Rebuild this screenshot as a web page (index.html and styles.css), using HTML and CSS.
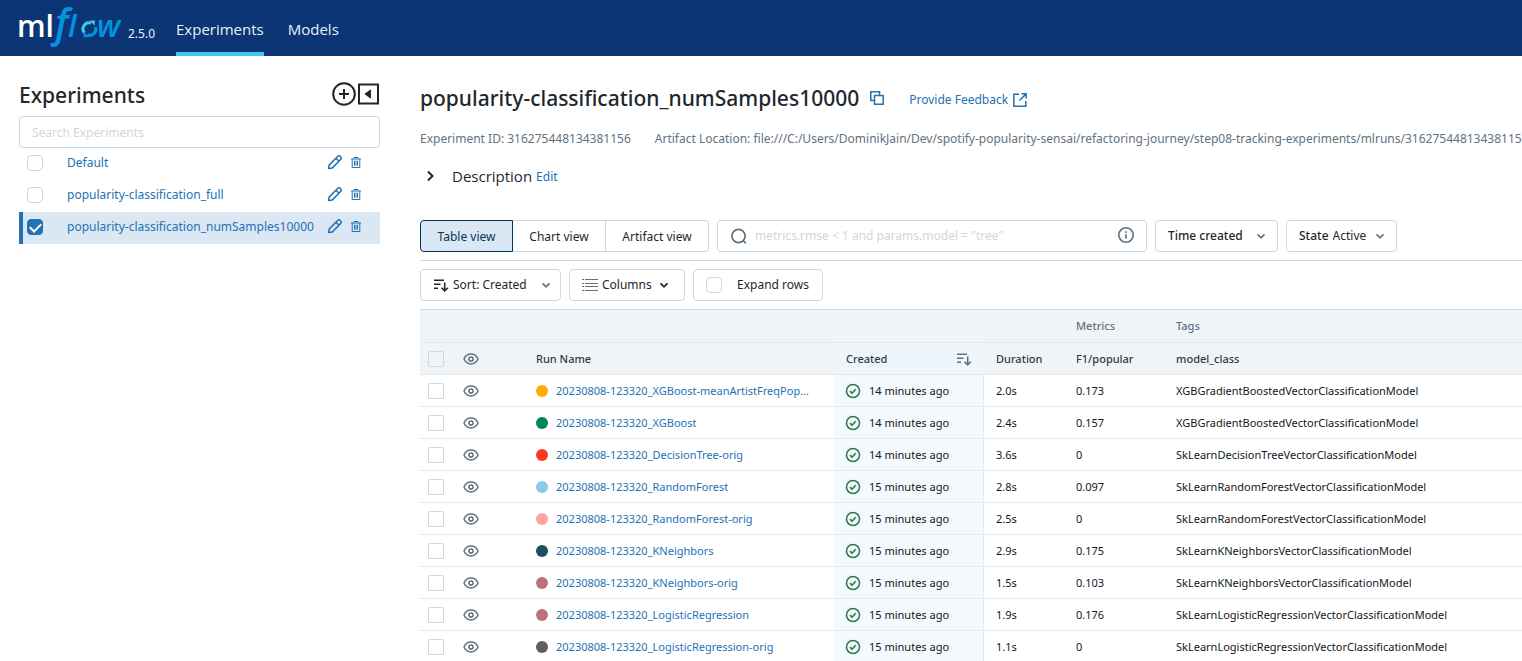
FILE: index.html
```
<!DOCTYPE html>
<html lang="en">
<head>
<meta charset="utf-8">
<title>MLflow Experiments</title>
<link rel="stylesheet" href="styles.css">
</head>
<body>
<svg class="sprite" aria-hidden="true">
  <symbol id="eye" viewBox="0 0 16 16"><path d="M1 8C2.500 4.700 5 3.100 8 3.100S13.500 4.700 15 8C13.500 11.300 11 12.900 8 12.900S2.500 11.300 1 8Z" fill="none" stroke="currentColor" stroke-width="1.500"/><circle cx="8" cy="8" r="2.100" fill="none" stroke="currentColor" stroke-width="1.500"/></symbol>
  <symbol id="ok" viewBox="0 0 16 16"><circle cx="8" cy="8" r="6.500" fill="none" stroke="currentColor" stroke-width="1.500"/><path d="M5 8.100l2.100 2L10.800 6.200" fill="none" stroke="currentColor" stroke-width="1.500"/></symbol>
  <symbol id="chevron" viewBox="0 0 16 16"><path d="M4.500 6.300L8 9.800l3.500-3.500" fill="none" stroke="currentColor" stroke-width="1.700"/></symbol>
  <symbol id="pencil" viewBox="0 0 16 16"><path d="M1.700 13.500l.4-3.400L10.900 1.300c.6-.6 1.500-.6 2.100 0l.9.900c.6.600.6 1.500 0 2.100L5.100 13.100zM9 3.200l3 3" fill="none" stroke="currentColor" stroke-width="1.500" stroke-linejoin="round"/></symbol>
  <symbol id="trash" viewBox="0 0 12 14"><path d="M1 3h10M4 2.500V1.500h4v1M2.200 3v8.500h7.600V3M4.500 4.700v5M6 4.700v5M7.500 4.700v5" fill="none" stroke="currentColor" stroke-width="1"/></symbol>
  <symbol id="sort" viewBox="0 0 16 16"><path d="M1 3.200h10M1 7.200h6.500M1 11.200h4M11.700 5.500v8M8.500 10.700l3.200 3.200 3.200-3.200" fill="none" stroke="currentColor" stroke-width="1.600"/></symbol>
</svg>
<div class="app">
  <header class="topbar">
    <a class="brand" href="#" aria-label="mlflow home">
      <svg class="logo" width="109" height="56" viewBox="0 0 109 56">
        <text class="logo-ml" x="-1" y="37">ml</text>
        <text class="logo-f" x="37" y="37">f</text>
        <text class="logo-flow" x="50" y="37">l</text>
        <g fill="none" stroke="#43c9ed" stroke-width="3"><path d="M66.500 32.800A6 6 0 0 1 73 23.200"/><path d="M77.300 27a6 6 0 0 1-8 7.800" stroke="#0194e2"/></g>
        <path d="M71.500 20.500h5.300v5.300z" fill="#43c9ed"/><path d="M71 37.200h-5.500v-5.400z" fill="#0194e2"/>
        <text class="logo-flow" x="79" y="37">w</text>
      </svg>
      <span class="version">2.5.0</span>
    </a>
    <nav class="nav">
      <a class="nav-link active" href="#">Experiments</a>
      <a class="nav-link" href="#">Models</a>
    </nav>
  </header>
  <div class="body">
    <aside class="sidebar">
      <div class="side-head">
        <h2>Experiments</h2>
        <button class="icon-btn" aria-label="New experiment"><svg width="24" height="24" viewBox="0 0 24 24"><circle cx="12" cy="12" r="10.800" fill="none" stroke="currentColor" stroke-width="2"/><path d="M12 7v10M7 12h10" stroke="currentColor" stroke-width="2"/></svg></button>
        <button class="icon-btn" aria-label="Collapse sidebar"><svg width="24" height="24" viewBox="0 0 24 24"><rect x="3" y="2.500" width="19" height="19" fill="none" stroke="currentColor" stroke-width="2"/><path d="M14.500 8v8L9 12z" fill="currentColor" stroke="currentColor"/></svg></button>
      </div>
      <input class="side-search" type="text" placeholder="Search Experiments" aria-label="Search experiments">
      <ul class="exp-list">
        <li class="exp"><input type="checkbox" class="check" id="e1"><label for="e1">Default</label><button class="icon-btn" aria-label="Rename"><svg width="16" height="16"><use href="#pencil"/></svg></button><button class="icon-btn" aria-label="Delete"><svg width="12" height="14"><use href="#trash"/></svg></button></li>
        <li class="exp"><input type="checkbox" class="check" id="e2"><label for="e2">popularity-classification_full</label><button class="icon-btn" aria-label="Rename"><svg width="16" height="16"><use href="#pencil"/></svg></button><button class="icon-btn" aria-label="Delete"><svg width="12" height="14"><use href="#trash"/></svg></button></li>
        <li class="exp selected"><input type="checkbox" class="check" id="e3" checked><label for="e3">popularity-classification_numSamples10000</label><button class="icon-btn" aria-label="Rename"><svg width="16" height="16"><use href="#pencil"/></svg></button><button class="icon-btn" aria-label="Delete"><svg width="12" height="14"><use href="#trash"/></svg></button></li>
      </ul>
    </aside>
    <main class="main">
      <div class="title-row">
        <h1>popularity-classification_numSamples10000</h1>
        <button class="icon-btn link" aria-label="Copy name"><svg width="16" height="16" viewBox="0 0 16 16" fill="none" stroke="currentColor" stroke-width="1.500"><path d="M5 10.500H1.800V1.800h8.700V5"/><path d="M5.500 5.500h8.700v8.700H5.500z"/></svg></button>
        <a class="feedback" href="#">Provide Feedback <svg width="16" height="16" viewBox="0 0 16 16" fill="none" stroke="currentColor" stroke-width="1.500"><path d="M7 2.200H1.800v12h12V9M9.500 1.800h4.700v4.700M14 2L7.500 8.500"/></svg></a>
      </div>
      <div class="meta"><span>Experiment ID: 316275448134381156</span><span>Artifact Location: file:///C:/Users/DominikJain/Dev/spotify-popularity-sensai/refactoring-journey/step08-tracking-experiments/mlruns/316275448134381156</span></div>
      <div class="desc"><button class="desc-toggle"><svg width="20" height="20" viewBox="0 0 20 20"><path d="M8 5.500l4.500 4.500L8 14.500" fill="none" stroke="currentColor" stroke-width="2"/></svg>Description</button><a href="#">Edit</a></div>
      <div class="toolbar">
        <div class="segmented">
          <button class="seg on">Table view</button><button class="seg">Chart view</button><button class="seg">Artifact view</button>
        </div>
        <div class="box search">
          <svg width="18" height="18" viewBox="0 0 18 18" fill="none" stroke="currentColor" stroke-width="1.700"><circle cx="8.500" cy="9" r="6.600"/><path d="M13 13.500l2.800 2.800"/></svg>
          <input type="text" placeholder="metrics.rmse &lt; 1 and params.model = &quot;tree&quot;" aria-label="Search runs">
          <button class="icon-btn" aria-label="Search help"><svg width="16" height="18" viewBox="0 0 16 18"><circle cx="8" cy="8" r="7.200" fill="none" stroke="currentColor" stroke-width="1.600"/><path d="M8 4.300v1.700M8 7.300v4.200" stroke="currentColor" stroke-width="1.700"/></svg></button>
        </div>
        <div class="box time"><select class="strong" aria-label="Time created"><option>Time created</option></select><svg class="chev" width="16" height="16"><use href="#chevron"/></svg></div>
        <div class="box state"><label class="strong" for="state">State</label><select id="state"><option>Active</option></select><svg class="chev" width="16" height="16"><use href="#chevron"/></svg></div>
      </div>
      <div class="toolbar second">
        <div class="box sort"><svg width="16" height="16"><use href="#sort"/></svg><select aria-label="Sort"><option>Sort: Created</option></select><svg class="chev" width="16" height="16"><use href="#chevron"/></svg></div>
        <button class="box columns"><svg class="chev" width="16" height="16" viewBox="0 0 16 16"><path d="M0 2.500h2M3 2.500h13M0 6.500h2M3 6.500h13M0 9.500h2M3 9.500h13M0 13.500h2M3 13.500h13" stroke="currentColor" stroke-width="1"/></svg>Columns<svg width="16" height="16"><use href="#chevron"/></svg></button>
        <label class="box expand"><input type="checkbox" class="check">Expand rows</label>
      </div>
      <table class="runs">
        <colgroup><col class="c-check"><col class="c-eye"><col class="c-name"><col class="c-created"><col class="c-duration"><col class="c-metric"><col></colgroup>
        <thead>
          <tr class="groups"><td colspan="5"></td><th>Metrics</th><th>Tags</th></tr>
          <tr><th class="sel"><input type="checkbox" class="check" aria-label="Select all"></th><th class="vis"><svg class="eye" width="16" height="16"><use href="#eye"/></svg></th><th>Run Name</th><th class="created"><span class="cell">Created<svg class="eye end" width="16" height="16"><use href="#sort"/></svg></span></th><th>Duration</th><th>F1/popular</th><th>model_class</th></tr>
        </thead>
        <tbody>
          <tr><td class="sel"><input type="checkbox" class="check" aria-label="Select run"></td><td class="vis"><svg class="eye" width="16" height="16"><use href="#eye"/></svg></td><td><span class="cell"><i class="dot amber"></i><a href="#">20230808-123320_XGBoost-meanArtistFreqPop...</a></span></td><td class="created"><span class="cell"><svg class="ok" width="16" height="16"><use href="#ok"/></svg>14 minutes ago</span></td><td>2.0s</td><td>0.173</td><td>XGBGradientBoostedVectorClassificationModel</td></tr>
          <tr><td class="sel"><input type="checkbox" class="check" aria-label="Select run"></td><td class="vis"><svg class="eye" width="16" height="16"><use href="#eye"/></svg></td><td><span class="cell"><i class="dot green"></i><a href="#">20230808-123320_XGBoost</a></span></td><td class="created"><span class="cell"><svg class="ok" width="16" height="16"><use href="#ok"/></svg>14 minutes ago</span></td><td>2.4s</td><td>0.157</td><td>XGBGradientBoostedVectorClassificationModel</td></tr>
          <tr><td class="sel"><input type="checkbox" class="check" aria-label="Select run"></td><td class="vis"><svg class="eye" width="16" height="16"><use href="#eye"/></svg></td><td><span class="cell"><i class="dot red"></i><a href="#">20230808-123320_DecisionTree-orig</a></span></td><td class="created"><span class="cell"><svg class="ok" width="16" height="16"><use href="#ok"/></svg>14 minutes ago</span></td><td>3.6s</td><td>0</td><td>SkLearnDecisionTreeVectorClassificationModel</td></tr>
          <tr><td class="sel"><input type="checkbox" class="check" aria-label="Select run"></td><td class="vis"><svg class="eye" width="16" height="16"><use href="#eye"/></svg></td><td><span class="cell"><i class="dot sky"></i><a href="#">20230808-123320_RandomForest</a></span></td><td class="created"><span class="cell"><svg class="ok" width="16" height="16"><use href="#ok"/></svg>15 minutes ago</span></td><td>2.8s</td><td>0.097</td><td>SkLearnRandomForestVectorClassificationModel</td></tr>
          <tr><td class="sel"><input type="checkbox" class="check" aria-label="Select run"></td><td class="vis"><svg class="eye" width="16" height="16"><use href="#eye"/></svg></td><td><span class="cell"><i class="dot pink"></i><a href="#">20230808-123320_RandomForest-orig</a></span></td><td class="created"><span class="cell"><svg class="ok" width="16" height="16"><use href="#ok"/></svg>15 minutes ago</span></td><td>2.5s</td><td>0</td><td>SkLearnRandomForestVectorClassificationModel</td></tr>
          <tr><td class="sel"><input type="checkbox" class="check" aria-label="Select run"></td><td class="vis"><svg class="eye" width="16" height="16"><use href="#eye"/></svg></td><td><span class="cell"><i class="dot teal"></i><a href="#">20230808-123320_KNeighbors</a></span></td><td class="created"><span class="cell"><svg class="ok" width="16" height="16"><use href="#ok"/></svg>15 minutes ago</span></td><td>2.9s</td><td>0.175</td><td>SkLearnKNeighborsVectorClassificationModel</td></tr>
          <tr><td class="sel"><input type="checkbox" class="check" aria-label="Select run"></td><td class="vis"><svg class="eye" width="16" height="16"><use href="#eye"/></svg></td><td><span class="cell"><i class="dot mauve"></i><a href="#">20230808-123320_KNeighbors-orig</a></span></td><td class="created"><span class="cell"><svg class="ok" width="16" height="16"><use href="#ok"/></svg>15 minutes ago</span></td><td>1.5s</td><td>0.103</td><td>SkLearnKNeighborsVectorClassificationModel</td></tr>
          <tr><td class="sel"><input type="checkbox" class="check" aria-label="Select run"></td><td class="vis"><svg class="eye" width="16" height="16"><use href="#eye"/></svg></td><td><span class="cell"><i class="dot mauve"></i><a href="#">20230808-123320_LogisticRegression</a></span></td><td class="created"><span class="cell"><svg class="ok" width="16" height="16"><use href="#ok"/></svg>15 minutes ago</span></td><td>1.9s</td><td>0.176</td><td>SkLearnLogisticRegressionVectorClassificationModel</td></tr>
          <tr><td class="sel"><input type="checkbox" class="check" aria-label="Select run"></td><td class="vis"><svg class="eye" width="16" height="16"><use href="#eye"/></svg></td><td><span class="cell"><i class="dot grey"></i><a href="#">20230808-123320_LogisticRegression-orig</a></span></td><td class="created"><span class="cell"><svg class="ok" width="16" height="16"><use href="#ok"/></svg>15 minutes ago</span></td><td>1.1s</td><td>0</td><td>SkLearnLogisticRegressionVectorClassificationModel</td></tr>
        </tbody>
      </table>
    </main>
  </div>
</div>
</body>
</html>
```
FILE: styles.css
```
* { box-sizing: border-box; }
body { margin: 0; font: 12px/20px "Noto Sans", "Open Sans", sans-serif; color: #1f272d; background: #fff; }
button, input, select { font: inherit; color: inherit; }
button { background: none; border: 0; padding: 0; cursor: pointer; }
a { color: #2272b4; text-decoration: none; }
svg { display: block; flex: none; }
h1, h2 { margin: 0; font-weight: 500; }
.sprite { position: absolute; width: 0; height: 0; }
.app { height: 100vh; overflow: hidden; display: flex; flex-direction: column; }

.topbar { flex: none; height: 56px; display: flex; background: #0b3574; padding-left: 18px; }
.brand { display: flex; align-items: center; gap: 1px; color: #e7f1fb; }
.logo { overflow: visible; }
.logo-ml { font: 600 30px "Open Sans", sans-serif; fill: #fff; }
.logo-f { font: italic 600 39px "Open Sans", sans-serif; fill: #0194e2; }
.logo-flow { font: italic 600 31px "Open Sans", sans-serif; fill: #0194e2; }
.version { padding-top: 12px; }
.nav { display: flex; gap: 24px; margin-left: 21px; }
.nav-link { display: flex; align-items: center; padding-top: 6px; color: #e7f1fb; font-family: "Open Sans", sans-serif; font-size: 15px; border-bottom: 4px solid transparent; }
.nav-link.active { border-color: #43c9ed; }

.body { flex: 1; min-height: 0; display: flex; gap: 40px; }
.sidebar { flex: none; width: 380px; padding: 24px 0 0 19px; }
.side-head { display: flex; align-items: center; height: 28px; margin-bottom: 8px; }
.side-head h2 { flex: 1; font-size: 21px; line-height: 28px; padding-top: 2px; }
.icon-btn { display: flex; flex: none; }
.link { color: #2272b4; }
.side-search { width: 100%; height: 32px; border: 1px solid #c9d9e6; border-radius: 4px; padding: 0 12px; outline: 0; }
::placeholder { color: #d3d6d9; opacity: 1; }
.exp-list { list-style: none; margin: 0; padding: 0; }
.exp { display: flex; align-items: center; height: 32px; padding: 0 18px 2px 4px; border-left: 4px solid transparent; color: #2272b4; }
.exp label { flex: 1; margin-left: 24px; }
.exp .icon-btn + .icon-btn { margin-left: 7px; }
.exp.selected { background: #dbe7f3; border-color: #2272b4; }

.check { appearance: none; flex: none; display: block; width: 16px; height: 16px; margin: 0; border: 1px solid #c9d9e6; border-radius: 4px; background: #fff; }
.check:checked { background: #2272b4; border-color: #2272b4; position: relative; }
.check:checked::after { content: ""; position: absolute; left: 4px; top: 1px; width: 5px; height: 9px; border: solid #fff; border-width: 0 2px 2px 0; transform: rotate(45deg); }

.main { flex: 1; min-width: 0; overflow: hidden; padding-top: 28px; }
.title-row { display: flex; align-items: center; height: 28px; }
.title-row h1 { font-size: 21px; line-height: 28px; margin-right: 10px; }
.feedback { display: flex; align-items: center; gap: 4px; margin-left: 24px; padding-top: 3px; }
.meta { display: flex; gap: 24px; margin-top: 17px; color: #5f7281; white-space: nowrap; }
.desc { display: flex; align-items: center; gap: 4px; height: 24px; margin-top: 15px; }
.desc a { padding-top: 2px; }
.desc-toggle { display: flex; align-items: center; gap: 12px; font-family: "Open Sans", sans-serif; font-size: 15px; }
.toolbar { display: flex; gap: 8px; margin-top: 32px; padding-bottom: 8px; border-bottom: 1px solid #c9d9e6; }
.toolbar.second { margin-top: 8px; }
.segmented { display: flex; }
.seg { height: 32px; padding: 1px 15px 0; border: 1px solid #c9d9e6; border-left-width: 0; min-width: 93px; white-space: nowrap; }
.seg.on { background: #dbe7f3; border: 1px solid #04355d; border-radius: 4px 0 0 4px; color: #04355d; }
.seg:last-child { border-radius: 0 4px 4px 0; min-width: 103px; }
.box { display: flex; align-items: center; height: 32px; border: 1px solid #c9d9e6; border-radius: 4px; padding: 0 12px; white-space: nowrap; }
.box select { appearance: none; border: 0; background: none; padding: 0; outline: 0; flex: 1; min-width: 0; }
.strong { font-weight: 500; }
.chev { color: #5f7281; }
.search { width: 430px; gap: 7px; color: #5f7281; }
.search input { flex: 1; border: 0; padding: 0; outline: 0; }
.time { width: 123px; padding-right: 8px; }
.state { width: 111px; padding-right: 8px; gap: 4px; }
.sort { width: 141px; padding-right: 6px; gap: 4px; }
.columns { width: 116px; gap: 4px; }
.expand { width: 130px; gap: 15px; }

.runs { width: 100%; table-layout: fixed; border-collapse: separate; border-spacing: 0; font-size: 11px; color: #11171c; }
.c-check { width: 32px; }
.c-eye { width: 72px; }
.c-name { width: 310px; }
.c-created { width: 150px; }
.c-duration { width: 80px; }
.c-metric { width: 100px; }
.runs th, .runs td { height: 32px; padding: 0 12px; border-bottom: 1px solid #e2eaf0; text-align: left; white-space: nowrap; overflow: hidden; }
.runs thead th, .runs thead td { background: #f0f4f7; font-weight: 500; color: #2f3b44; }
.runs .groups th, .runs .groups td { height: 33px; color: #5f7281; }
.runs .sel { padding: 0 8px; }
.runs .vis { padding: 0 11px; }
.runs thead .check { background: transparent; }
.runs .check { border-radius: 2px; border-color: #c9d9e6; }
.runs thead .created { background: #eef6fd; }
.runs tbody .created { background: #f4f9fe; border-right: 1px solid #e2eaf0; }
.runs td.created { padding-left: 11px; }
.cell { display: flex; align-items: center; gap: 8px; }
.cell a { overflow: hidden; text-overflow: ellipsis; }
.end { margin-left: auto; }
.eye { color: #5f7281; }
.ok { color: #277c43; }
.dot { flex: none; width: 12px; height: 12px; border-radius: 50%; }
.amber { background: #ffab00; }
.green { background: #00875c; }
.red { background: #ff3621; }
.sky { background: #8bcae7; }
.pink { background: #ffa3a0; }
.teal { background: #1b5162; }
.mauve { background: #bf7080; }
.grey { background: #5f5f5f; }
```
